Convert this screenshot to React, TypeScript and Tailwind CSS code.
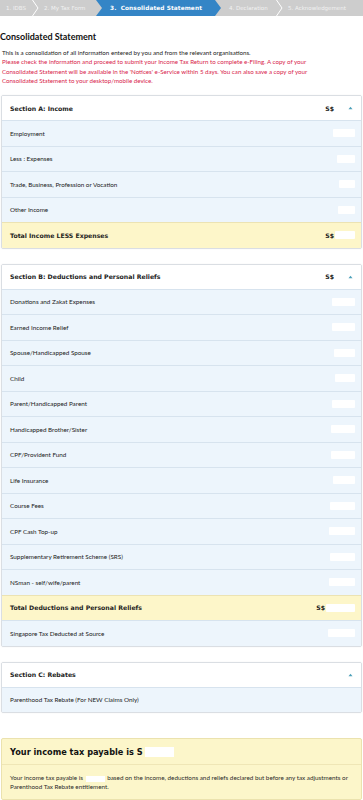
import React from "react";

const body = "font-['Lato',sans-serif]";
const wide = "font-['DejaVu_Sans',sans-serif]";

function Caret() {
  return (
    <svg width="5" height="4" viewBox="0 0 5 4" className="mr-[8px]">
      <path d="M0.5 3.2 L2.5 0.8 L4.5 3.2 Z" fill="#4b9fb8" />
    </svg>
  );
}

function Blank({ w = 22, h = 8 }: { w?: number; h?: number }) {
  return <span className="bg-white rounded-[1px]" style={{ width: w, height: h }} />;
}

type Row = { label: string; w?: number; total?: boolean };

function Section({ title, rows, showCurrency = true }: { title: string; rows: Row[]; showCurrency?: boolean }) {
  return (
    <div className="mx-px border border-[#dadee3] rounded-[2px] shadow-[0_0_2px_rgba(0,0,0,0.06)] overflow-hidden">
      <div className="h-[24px] bg-white flex items-center pl-[8px]">
        <span className={`${wide} font-bold text-[6.2px] text-[#222] flex-1`}>{title}</span>
        {showCurrency && <span className={`${wide} font-bold text-[6.2px] text-[#222] mr-[14px]`}>S$</span>}
        <Caret />
      </div>
      {rows.map((r) =>
        r.total ? (
          <div key={r.label} className="h-[25.5px] border-t border-[#ece3b3] bg-[#fdf6c9] flex items-center pl-[8px] pr-[6px]">
            <span className={`${wide} font-bold text-[6.2px] text-[#1d1d1d] flex-1`}>{r.label}</span>
            <span className={`${wide} font-bold text-[6.2px] text-[#1d1d1d] mr-[1px]`}>S$</span>
            <Blank w={r.w ?? 21} />
          </div>
        ) : (
          <div key={r.label} className="h-[25.5px] border-t border-[#d7e3ee] bg-[#edf5fc] flex items-center pl-[8px] pr-[6px]">
            <span className={`${body} text-[6.3px] text-[#222] flex-1`}>{r.label}</span>
            <Blank w={r.w ?? 22} />
          </div>
        )
      )}
    </div>
  );
}

function Chevron() {
  return (
    <svg width="7" height="16" viewBox="0 0 7 16" className="shrink-0">
      <path d="M0.5 0 L6 8 L0.5 16" fill="none" stroke="#ffffff" strokeWidth="1" />
    </svg>
  );
}

function Stepper() {
  return (
    <div className="h-[16px] bg-[#cdcdcd] flex items-center overflow-hidden">
      <span className={`${wide} text-[5.5px] text-[#f2f2f2] w-[32px] pl-[6px] shrink-0`}>1. IDBS</span>
      <Chevron />
      <span className={`${wide} text-[5.5px] text-[#f2f2f2] w-[59px] pl-[5px] shrink-0`}>2. My Tax Form</span>
      <div className="h-[16px] w-[125px] -ml-[2px] shrink-0 bg-[#3485c6] flex items-center pl-[14px] [clip-path:polygon(0_0,calc(100%_-_6px)_0,100%_50%,calc(100%_-_6px)_100%,0_100%,6px_50%)]">
        <span className={`${wide} font-bold text-[5.8px] text-white tracking-[0.1px]`}>3.&nbsp; Consolidated Statement</span>
      </div>
      <span className={`${wide} text-[5.5px] text-[#f2f2f2] w-[55px] pl-[8px] shrink-0`}>4. Declaration</span>
      <Chevron />
      <span className={`${wide} text-[5.5px] text-[#f2f2f2] pl-[5px] whitespace-nowrap`}>5. Acknowledgement</span>
    </div>
  );
}

export default function App() {
  const sectionA: Row[] = [
    { label: "Employment", w: 22 },
    { label: "Less : Expenses", w: 18 },
    { label: "Trade, Business, Profession or Vocation", w: 16 },
    { label: "Other Income", w: 17 },
    { label: "Total Income LESS Expenses", total: true, w: 20 },
  ];
  const sectionB: Row[] = [
    { label: "Donations and Zakat Expenses", w: 23 },
    { label: "Earned Income Relief", w: 23 },
    { label: "Spouse/Handicapped Spouse", w: 21 },
    { label: "Child", w: 20 },
    { label: "Parent/Handicapped Parent", w: 23 },
    { label: "Handicapped Brother/Sister", w: 24 },
    { label: "CPF/Provident Fund", w: 24 },
    { label: "Life Insurance", w: 22 },
    { label: "Course Fees", w: 25 },
    { label: "CPF Cash Top-up", w: 26 },
    { label: "Supplementary Retirement Scheme (SRS)", w: 25 },
    { label: "NSman - self/wife/parent", w: 26 },
    { label: "Total Deductions and Personal Reliefs", total: true, w: 29 },
    { label: "Singapore Tax Deducted at Source", w: 27 },
  ];
  const sectionC: Row[] = [{ label: "Parenthood Tax Rebate (For NEW Claims Only)", w: 0 }];

  return (
    <div className="w-[363px] min-h-[800px] bg-white">
      <Stepper />
      <h2 className={`${body} font-bold text-[9px] text-[#111] mt-[15px] leading-[12px]`}>Consolidated Statement</h2>
      <div className={`${body} text-[6.2px] leading-[9.3px] mt-[5px] pl-[2px] pr-[30px]`}>
        <p className="text-[#222]">This is a consolidation of all information entered by you and from the relevant organisations.</p>
        <p className="text-[#d81b4a]">
          Please check the information and proceed to submit your Income Tax Return to complete e-Filing. A copy of your Consolidated Statement will be available in the 'Notices' e-Service within 5 days. You can also save a copy of your Consolidated Statement to your desktop/mobile device.
        </p>
      </div>
      <div className="mt-[10px]">
        <Section title="Section A: Income" rows={sectionA} />
      </div>
      <div className="mt-[15px]">
        <Section title="Section B: Deductions and Personal Reliefs" rows={sectionB} />
      </div>
      <div className="mt-[15px]">
        <Section title="Section C: Rebates" rows={sectionC} showCurrency={false} />
      </div>
      <div className="mt-[25px] mx-px border border-[#ebe2ae] bg-[#fcf6ca] rounded-[2px]">
        <div className="h-[26px] border-b border-[#efe6b6] flex items-center pl-[8px]">
          <span className={`${wide} font-bold text-[8.2px] text-[#111]`}>Your income tax payable is S</span>
          <span className="ml-[2px] w-[29px] h-[10px] bg-white" />
        </div>
        <p className={`${body} text-[6.3px] leading-[9px] text-[#2b2b2b] pl-[8px] pr-[4px] pt-[8px] pb-[8px]`}>
          Your income tax payable is <span className="inline-block w-[19px] h-[6px] bg-white align-middle mx-[1px]" /> based on the income, deductions and reliefs declared but before any tax adjustments or Parenthood Tax Rebate entitlement.
        </p>
      </div>
    </div>
  );
}
